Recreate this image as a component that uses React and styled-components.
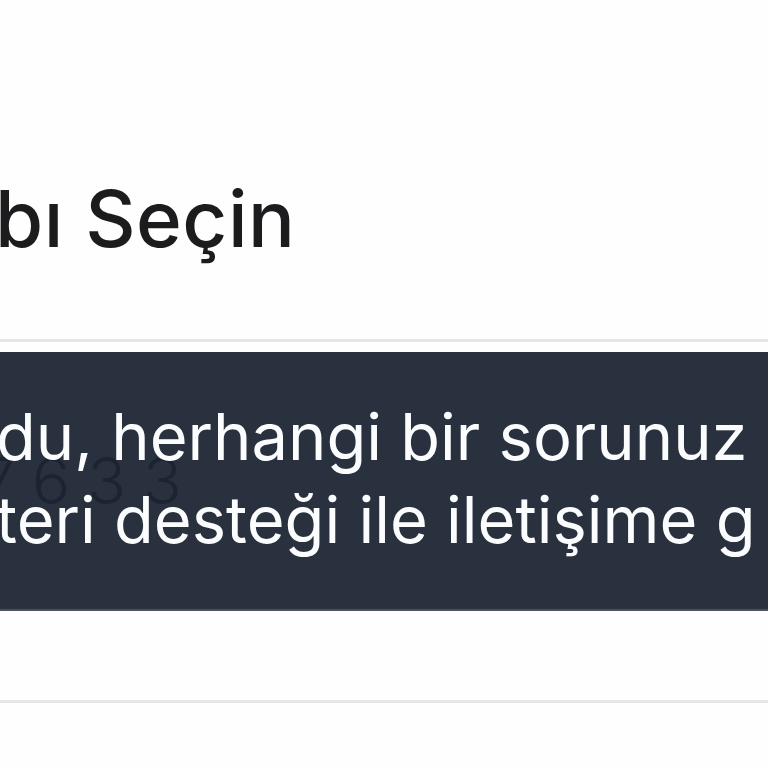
import React from "react";
import styled, { createGlobalStyle } from "styled-components";

const GlobalStyle = createGlobalStyle`
  html, body {
    margin: 0;
    padding: 0;
    background: #fefefe;
    overflow: hidden;
  }
  body {
    font-family: Inter, "Noto Sans", "Liberation Sans", sans-serif;
    -webkit-font-smoothing: antialiased;
  }
`;

const App = () => {
  return (
    <Page>
      <GlobalStyle />
      <Header>
        <Title>bı Seçin</Title>
      </Header>
      <CardRow>
        <CardNumber>7633</CardNumber>
        <Tooltip>
          <TooltipText>du, herhangi bir sorunuz</TooltipText>
          <TooltipText>teri desteği ile iletişime g</TooltipText>
        </Tooltip>
      </CardRow>
    </Page>
  );
};

const Page = styled.div`
  width: 768px;
  height: 768px;
  overflow: hidden;
  background: #fefefe;
`;

const Header = styled.div`
  height: 339px;
  display: flex;
  align-items: flex-start;
  padding-top: 172px;
  box-sizing: border-box;
`;

const Title = styled.h1`
  margin: 0 0 0 -5px;
  font-weight: 500;
  font-size: 78px;
  line-height: 94px;
  letter-spacing: 0.5px;
  color: #1c1c1e;
  white-space: nowrap;
`;

const CardRow = styled.div`
  position: relative;
  height: 364px;
  border-top: 3px solid #e4e5e7;
  border-bottom: 3px solid #e6e6e6;
  box-sizing: border-box;
  display: flex;
  align-items: center;
`;

const CardNumber = styled.span`
  margin-left: -20px;
  margin-top: -82px;
  font-weight: 300;
  font-size: 64px;
  color: #0a0d12;
  letter-spacing: 17px;
`;

const Tooltip = styled.div`
  position: absolute;
  top: 10px;
  left: 0;
  right: 0;
  height: 259px;
  box-sizing: border-box;
  background: rgba(28, 38, 51, 0.95);
  border-bottom: 2px solid #4a525c;
  display: flex;
  flex-direction: column;
  justify-content: center;
  padding-bottom: 6px;
`;

const TooltipText = styled.span`
  margin-left: -4px;
  font-weight: 400;
  font-size: 65px;
  line-height: 83px;
  color: #fbfcfd;
  white-space: nowrap;
`;

export default App;
